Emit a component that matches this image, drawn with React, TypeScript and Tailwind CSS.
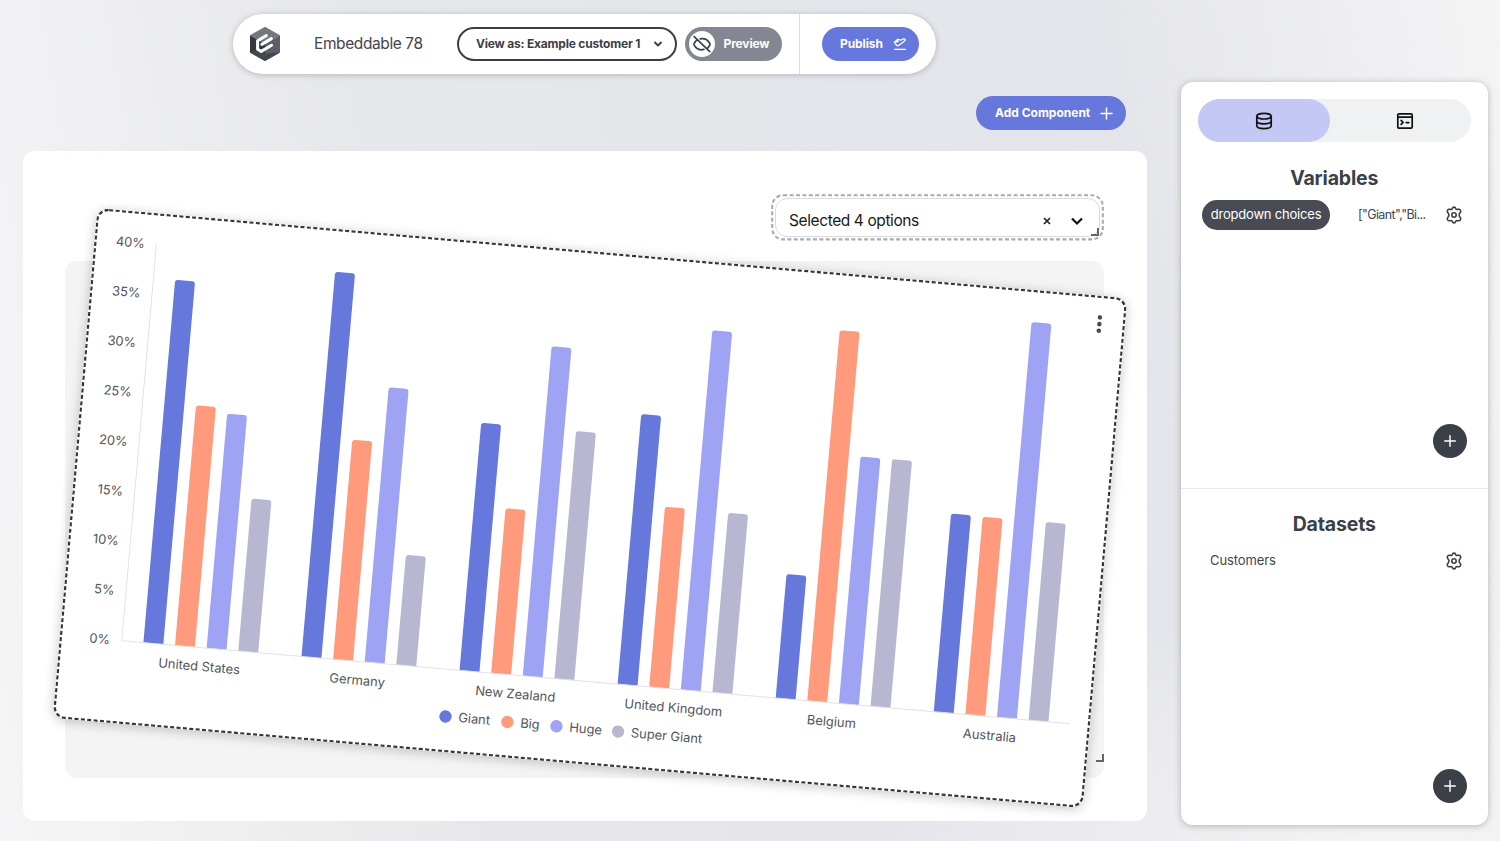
import { ChevronDown, Plus } from "lucide-react";
import type { ReactNode } from "react";

const COLORS = ["#6678dc", "#ff9a7c", "#9ea3f3", "#b8b7d1"];
const SERIES = [
  { name: "Giant", x: 391.2 },
  { name: "Big", x: 453.3 },
  { name: "Huge", x: 502.6 },
  { name: "Super Giant", x: 564.4 },
];
const DATA = [
  { country: "United States", values: [36.63, 24.23, 23.67, 15.37] },
  { country: "Germany", values: [38.83, 22.16, 27.73, 11.11] },
  { country: "New Zealand", values: [24.99, 16.64, 33.27, 24.98] },
  { country: "United Kingdom", values: [27.25, 18.19, 36.28, 18.14] },
  { country: "Belgium", values: [12.5, 37.4, 24.92, 24.94] },
  { country: "Australia", values: [20, 19.97, 39.89, 19.98] },
];
const AXIS_X = 62.1;
const BASE_Y = 429;
const UNIT = 9.945;
const BAND = 158.67;
const BAR = 20;

function barPath(x: number, h: number) {
  const r = 3;
  const t = BASE_Y - h;
  return `M${x} ${BASE_Y}V${t + r}q0 ${-r} ${r} ${-r}h${BAR - 2 * r}q${r} 0 ${r} ${r}V${BASE_Y}z`;
}

function Chart() {
  return (
    <svg width="1034" height="512" viewBox="0 0 1034 512" className="block" fontFamily="Inter, sans-serif" fontSize="13" fill="#54565b">
      {[0, 5, 10, 15, 20, 25, 30, 35, 40].map((t) => (
        <text key={t} x="50.4" y={BASE_Y - t * UNIT + 4.7} textAnchor="end" letterSpacing="-0.15">{t}%</text>
      ))}
      {DATA.map((d, i) => (
        <g key={d.country}>
          {d.values.map((v, j) => (
            <path key={j} d={barPath(AXIS_X + BAND * i + (BAND / 5) * (j + 1) - BAR / 2, v * UNIT)} fill={COLORS[j]} />
          ))}
          <text x={AXIS_X + BAND * (i + 0.5)} y="452.3" textAnchor="middle" letterSpacing="-0.04">{d.country}</text>
        </g>
      ))}
      <path d="M62.1 31V429H1014.1" fill="none" stroke="#e2e2e4" strokeWidth="1" />
      {SERIES.map((s, i) => (
        <g key={s.name}>
          <circle cx={s.x} cy="476.3" r="6.2" fill={COLORS[i]} />
          <text x={s.x + 13} y="480.8" letterSpacing="-0.08">{s.name}</text>
        </g>
      ))}
      <g fill="#4a4c52">
        <circle cx="1008.4" cy="21.7" r="2.3" />
        <circle cx="1008.4" cy="28.4" r="2.3" />
        <circle cx="1008.4" cy="35.1" r="2.3" />
      </g>
    </svg>
  );
}

function Logo() {
  return (
    <svg width="32" height="36" viewBox="0 0 32 36">
      <path d="M16 .7 31 9.2 16 18 1 9.2z" fill="#74777d" />
      <path d="M1 9.2 16 18v17L1 26.5z" fill="#34373e" />
      <path d="M31 9.2 16 18v17l15-8.5z" fill="#5b5e66" />
      <path d="M1 26.5 7 23l9 4.500 15-1L16 35z" fill="#43464d" />
      <path d="M17.300 9.600 8.600 14.800v8.400l3.600 2.200 10.400-6.100M12.800 18.400l9.500-5.800" fill="none" stroke="#fff" strokeWidth="3" strokeLinecap="round" strokeLinejoin="round" />
    </svg>
  );
}

function HiddenIcon() {
  return (
    <svg width="20" height="20" viewBox="0 0 20 20" fill="none" stroke="#3b3f47" strokeWidth="1.7" strokeLinecap="round">
      <path d="M2.2 2.6 17.8 17.6M8.2 4.9c4.6-.9 8 1.7 9.6 4.6.3.6.3 1.1 0 1.7q-.8 1.5-2 2.6M5 5.900Q3.300 7.300 2.200 9.500c-.3.6-.3 1.1 0 1.7 1.800 3.300 5.500 5.300 9.700 4.200" />
    </svg>
  );
}

function PublishIcon() {
  return (
    <svg width="14" height="14" viewBox="0 0 14 14" fill="none" stroke="white" strokeWidth="1.3" strokeLinejoin="round" strokeLinecap="round">
      <path d="M1.7 12.4h10.800M1.400 5.100l1.100-1 1.500.7 1.200-.6-1.600-1 1.200-.8 2.900.7 2.700-1.100q1.300-.3 1.800.4.3 1-.7 1.600L5.600 8.400q-1.300.5-2.200-.2z" />
    </svg>
  );
}

function Gear() {
  return (
    <svg width="18" height="18" viewBox="0 0 18 18" fill="none" stroke="#3b3f46" strokeWidth="1.6" strokeLinejoin="round">
      <path d="M7.3 2.5q.3-1.4 1.7-1.4t1.7 1.4q.4 1.2 1.6.9l1.3-.2q1.2-.1 1.8.9.8 1.3-.1 2.3l-.8 1q-.9 1.6 0 3.2l.8 1q.9 1 .1 2.3-.6 1-1.8.9l-1.3-.2q-1.2-.3-1.6.9-.3 1.4-1.7 1.4t-1.7-1.4q-.4-1.2-1.6-.9l-1.3.2q-1.2.1-1.8-.9-.8-1.3.1-2.3l.8-1q.9-1.6 0-3.2l-.8-1q-.9-1-.1-2.3.6-1 1.8-.9l1.3.2q1.2.3 1.6-.9z" />
      <circle cx="9" cy="9" r="2.2" />
    </svg>
  );
}

function DatabaseIcon() {
  return (
    <svg width="18" height="18" viewBox="0 0 18 18" fill="none" stroke="#111" strokeWidth="1.7">
      <ellipse cx="9" cy="4.2" rx="7.2" ry="2.8" />
      <path d="M1.8 4.2v9.6c0 1.6 3.2 2.8 7.2 2.8s7.2-1.2 7.2-2.8V4.2M1.8 9c0 1.6 3.2 2.8 7.2 2.8s7.2-1.2 7.2-2.8" />
    </svg>
  );
}

function TerminalIcon() {
  return (
    <svg width="18" height="18" viewBox="0 0 18 18" fill="none" stroke="#111" strokeWidth="1.7" strokeLinecap="round" strokeLinejoin="round">
      <rect x="1.8" y="1.8" width="14.4" height="14.4" rx="1.2" />
      <path d="M1.8 5.2h14.4M5.1 8.3l2 2-2 2M10.2 10.6h2.6" />
    </svg>
  );
}

function AddButton() {
  return (
    <button className="flex size-[34px] items-center justify-center rounded-full bg-[#3b3f47] text-white">
      <Plus size={18} strokeWidth={1.9} />
    </button>
  );
}

function Panel({ title, height, children }: { title: string; height: string; children: ReactNode }) {
  return (
    <section className={`flex flex-col ${height}`}>
      <h2 className="text-center text-[19.5px] leading-7 font-bold tracking-[-0.15px] text-[#3b3f47]">{title}</h2>
      {children}
      <div className="mt-auto flex justify-end pr-[21px]">
        <AddButton />
      </div>
    </section>
  );
}

export default function App() {
  return (
    <div className="flex h-[841px] w-[1500px] overflow-hidden bg-[radial-gradient(ellipse_520px_260px_at_1400px_860px,#f4f4f6_0%,#f4f4f600_100%),linear-gradient(80deg,#f5f5f6_0%,#f3f3f5_6%,#e6e7ea_30%,#e4e5ea_75%,#f4f4f5_100%)] font-['Inter',sans-serif]">
      <main className="flex w-[1146.5px] flex-col pl-[22.5px]">
        <header className="mt-[14px] ml-[210.5px] flex h-[60px] w-[703px] shrink-0 items-center rounded-full bg-white pl-4 shadow-[0_1px_6px_rgba(0,0,0,0.22)]">
          <Logo />
          <div className="ml-[33px] w-[143px] text-[15.5px] tracking-[-0.4px] whitespace-nowrap text-[#42454c]">Embeddable 78</div>
          <button className="flex h-[34px] w-[220px] items-center justify-between rounded-full border-2 border-[#3b3f47] pr-[11px] pl-[17px] text-[12px] font-bold tracking-[-0.2px] whitespace-nowrap text-[#3b3f47]">
            View as: Example customer 1
            <ChevronDown size={12} strokeWidth={3.8} />
          </button>
          <button className="ml-2 flex h-[34px] w-[97px] items-center rounded-full bg-[#828791] pl-1 text-[12px] font-bold tracking-[-0.15px] text-white">
            <span className="mr-[8.5px] flex size-[26px] items-center justify-center rounded-full bg-white">
              <HiddenIcon />
            </span>
            Preview
          </button>
          <div className="ml-[17px] h-full w-px bg-[#dddddf]" />
          <button className="ml-[22px] flex h-[34px] w-[97px] items-center justify-between rounded-full bg-[#6678dc] pr-3 pl-[18px] text-[12px] font-bold tracking-[-0.1px] text-white">
            Publish
            <PublishIcon />
          </button>
        </header>
        <div className="mt-[22px] flex h-[34px] shrink-0 justify-end pr-[20.5px]">
          <button className="flex w-[150px] items-center justify-between rounded-full bg-[#6678dc] pr-[10px] pl-[19px] text-[12px] font-bold whitespace-nowrap text-white">
            Add Component
            <Plus size={19} strokeWidth={1.8} />
          </button>
        </div>
        <div className="mt-[21px] h-[670px] shrink-0 rounded-xl bg-white pt-[43px] pr-[42.5px] pl-[42.5px]">
          <div className="flex justify-end">
            <div className="relative h-[47px] w-[333px] rounded-xl">
              <svg className="absolute inset-0" width="333" height="47">
                <rect x="1.2" y="1.2" width="330.6" height="44.2" rx="11" fill="none" stroke="#a9abb3" strokeWidth="2.1" strokeDasharray="4 2.4" />
              </svg>
              <div className="mx-[4px] flex h-full items-center py-[4px]">
                <div className="flex h-full w-full items-center rounded-xl border border-[#d9dadd] pt-[6px] pr-[16px] pl-[13px] text-[15.5px] tracking-[-0.4px] text-[#17181a]">
                  <span className="grow">Selected 4 options</span>
                  <svg width="10" height="10" viewBox="0 0 10 10" className="mr-[19px]">
                    <path d="m2 2 6 6M8 2 2 8" stroke="#222" strokeWidth="1.7" />
                  </svg>
                  <svg width="12" height="10" viewBox="0 0 12 10">
                    <path d="m1 2.5 5 5 5-5" fill="none" stroke="#111" strokeWidth="2.2" />
                  </svg>
                </div>
              </div>
              <svg className="absolute right-[5px] bottom-[5px]" width="8" height="8">
                <path d="M0 7h7V0" fill="none" stroke="#62656c" strokeWidth="2" />
              </svg>
            </div>
          </div>
          <div className="relative mt-[20px] h-[517px] w-[1039px] rounded-xl bg-[#f4f4f4]">
            <svg className="absolute right-0 bottom-4" width="8" height="8">
              <path d="M0 7h7V0" fill="none" stroke="#62656c" strokeWidth="2" />
            </svg>
            <div className="absolute top-[-9px] left-[8px] h-[512px] w-[1034px] rotate-5 rounded-xl bg-white shadow-[0_2px_12px_rgba(0,0,0,0.22)]">
              <svg className="absolute inset-0" width="1034" height="512">
                <rect x="1.1" y="1.1" width="1031.8" height="509.8" rx="11" fill="none" stroke="#33363d" strokeWidth="2.3" strokeDasharray="4 2.4" />
              </svg>
              <Chart />
            </div>
          </div>
        </div>
      </main>
      <aside className="mt-[82px] ml-[34px] flex h-[743px] w-[307.5px] flex-col rounded-xl bg-white shadow-[0_1px_7px_rgba(0,0,0,0.25)]">
        <div className="mx-[17px] mt-[17px] flex h-[43px] shrink-0 rounded-full bg-[#f0f1f3]">
          <div className="flex w-[132.5px] items-center justify-center rounded-full bg-[#c3c8f4]">
            <DatabaseIcon />
          </div>
          <div className="flex grow items-center justify-center pl-2">
            <TerminalIcon />
          </div>
        </div>
        <div className="mt-[22px]">
          <Panel title="Variables" height="h-[294px]">
            <div className="mt-[8px] flex h-[30px] items-center pr-[25px] pl-[21.5px] text-[13px] text-[#42454c]">
              <span className="flex h-[30px] w-[128px] shrink-0 items-center justify-center rounded-full bg-[#484b53] tracking-[-0.2px] whitespace-nowrap text-white">dropdown choices</span>
              <span className="ml-7 grow text-[12.5px] tracking-[-0.6px] whitespace-nowrap">["Giant","Bi...</span>
              <Gear />
            </div>
          </Panel>
        </div>
        <div className="mt-[30px] h-px shrink-0 bg-[#e8e8ea]" />
        <div className="mt-[21px]">
          <Panel title="Datasets" height="h-[293px]">
            <div className="mt-[8px] flex h-[30px] items-center justify-between pr-[25px] pl-[29.5px] text-[13px] tracking-[-0.1px] text-[#42454c]">
              Customers
              <Gear />
            </div>
          </Panel>
        </div>
      </aside>
    </div>
  );
}
